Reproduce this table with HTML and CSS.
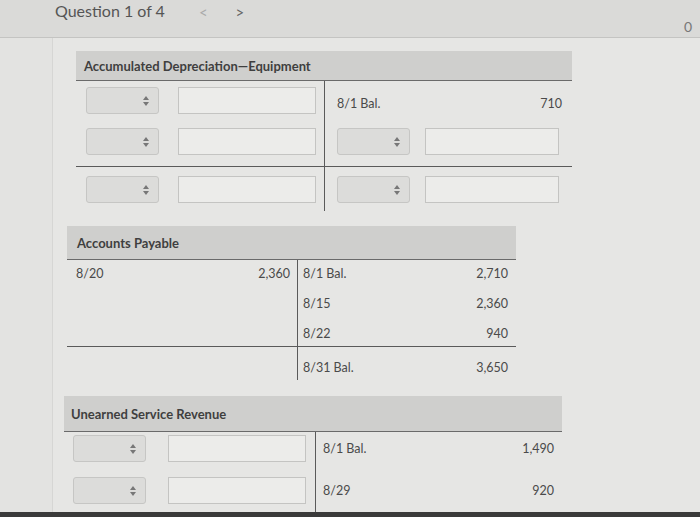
FILE: index.html
```html
<!DOCTYPE html>
<html>
<head>
<meta charset="utf-8">
<link rel="stylesheet" href="styles.css">
</head>
<body>
<header class="topbar">
  <div class="qnav">
    <span class="qtitle">Question 1 of 4</span>
    <span class="arrow prev">&lt;</span>
    <span class="arrow next">&gt;</span>
  </div>
  <span class="score">0</span>
</header>
<main class="content">
  <section class="taccount acc-dep">
    <div class="thead">Accumulated Depreciation—Equipment</div>
    <div class="tbody">
      <div class="cell debit upper">
        <div class="row"><span class="sel"><i class="spin"></i></span><span class="inp"></span></div>
        <div class="row"><span class="sel"><i class="spin"></i></span><span class="inp"></span></div>
      </div>
      <div class="cell credit upper">
        <div class="row text"><span>8/1 Bal.</span><span>710</span></div>
        <div class="row"><span class="sel"><i class="spin"></i></span><span class="inp"></span></div>
      </div>
      <div class="cell debit lower">
        <div class="row"><span class="sel"><i class="spin"></i></span><span class="inp"></span></div>
      </div>
      <div class="cell credit lower">
        <div class="row"><span class="sel"><i class="spin"></i></span><span class="inp"></span></div>
      </div>
    </div>
  </section>

  <section class="taccount payable">
    <div class="thead">Accounts Payable</div>
    <div class="tbody">
      <div class="cell debit upper">
        <div class="row text"><span>8/20</span><span>2,360</span></div>
      </div>
      <div class="cell credit upper">
        <div class="row text"><span>8/1 Bal.</span><span>2,710</span></div>
        <div class="row text"><span>8/15</span><span>2,360</span></div>
        <div class="row text"><span>8/22</span><span>940</span></div>
      </div>
      <div class="cell debit lower"></div>
      <div class="cell credit lower">
        <div class="row text"><span>8/31 Bal.</span><span>3,650</span></div>
      </div>
    </div>
  </section>

  <section class="taccount unearned">
    <div class="thead">Unearned Service Revenue</div>
    <div class="tbody">
      <div class="cell debit upper">
        <div class="row"><span class="sel"><i class="spin"></i></span><span class="inp"></span></div>
        <div class="row"><span class="sel"><i class="spin"></i></span><span class="inp"></span></div>
      </div>
      <div class="cell credit upper">
        <div class="row text"><span>8/1 Bal.</span><span>1,490</span></div>
        <div class="row text"><span>8/29</span><span>920</span></div>
      </div>
    </div>
  </section>
</main>
<footer class="bottom"></footer>
</body>
</html>
```
FILE: styles.css
```css
* { box-sizing: border-box; }
html, body { height: 100%; }
body {
  margin: 0;
  background: #e3e3e1;
  font-family: Lato, "Noto Sans", sans-serif;
  color: #4a4a4a;
  overflow: hidden;
  display: flex;
  flex-direction: column;
}
.topbar {
  height: 38px;
  background: #dadad8;
  border-bottom: 1px solid #c4c4c2;
  display: flex;
  justify-content: space-between;
  padding: 0 8px 0 55px;
  flex-shrink: 0;
}
.qnav {
  display: flex;
  align-items: center;
  margin-top: -5px;
  height: 30px;
}
.qtitle { font-size: 16px; color: #555; }
.arrow { font-size: 15px; color: #666; margin-top: 3px; }
.prev { margin-left: 34px; color: #aaa; }
.next { margin-left: 28px; }
.score {
  align-self: flex-end;
  font-size: 14px;
  color: #777;
  margin-bottom: 2px;
}
.content {
  flex: 1;
  padding: 13px 0 0 0;
  border-left: 1px solid #d6d6d4;
  margin-left: 52px;
  background: #e6e6e4;
}
.taccount { display: flex; flex-direction: column; }
.thead {
  background: #cfcfcd;
  font-weight: bold;
  font-size: 13px;
  color: #3f3f3f;
  display: flex;
  align-items: center;
  border-bottom: 1px solid #6a6a6a;
}
.tbody {
  display: grid;
}
.cell { display: flex; flex-direction: column; }
.credit { border-left: 1px solid #5a5a5a; }
.upper { border-bottom: 1px solid #5a5a5a; }
.row { display: flex; align-items: center; }
.row.text { justify-content: space-between; font-size: 12.5px; color: #4a4a4a; }
.sel {
  width: 73px;
  height: 27px;
  background: #dcdcda;
  border: 1px solid #c6c6c4;
  border-radius: 3px;
  position: relative;
}
.spin {
  position: absolute;
  right: 9px;
  top: 8px;
  width: 6px;
  height: 10px;
}
.spin::before, .spin::after {
  content: "";
  position: absolute;
  left: 0;
  border-left: 3px solid transparent;
  border-right: 3px solid transparent;
}
.spin::before { top: 0; border-bottom: 4px solid #777; }
.spin::after { bottom: 0; border-top: 4px solid #777; }
.inp {
  width: 138px;
  height: 27px;
  background: #ececea;
  border: 1px solid #c4c4c2;
  margin-left: 19px;
}

/* Accumulated Depreciation */
.acc-dep { margin-left: 23px; width: 496px; }
.acc-dep .thead { height: 30px; padding-left: 8px; }
.acc-dep .tbody { grid-template-columns: 248px 248px; }
.acc-dep .debit { padding-left: 10px; }
.acc-dep .credit { padding-left: 12px; padding-right: 10px; }
.acc-dep .upper { height: 86px; padding-top: 6px; gap: 14px; }
.acc-dep .upper .row { height: 27px; }
.acc-dep .credit .inp { width: 134px; margin-left: 15px; }
.acc-dep .lower { height: 44px; padding-top: 9px; }
.acc-dep .credit .row.text { align-items: flex-start; padding-top: 9px; }

/* Accounts Payable */
.payable { margin-left: 14px; width: 449px; margin-top: 15px; }
.payable .thead { height: 34px; padding-left: 10px; }
.payable .tbody { grid-template-columns: 230px 219px; }
.payable .debit { padding: 3px 7px 0 9px; }
.payable .credit { padding: 3px 8px 0 5px; }
.payable .upper { height: 87px; }
.payable .row.text { height: 30px; flex-shrink: 0; align-items: flex-start; padding-top: 3px; }
.payable .credit.upper .row.text:last-child { height: 24px; }
.payable .lower { height: 33px; }
.payable .credit.lower { padding-top: 10px; }

/* Unearned Service Revenue */
.unearned { margin-left: 11px; width: 498px; margin-top: 16px; }
.unearned .thead { height: 36px; padding-left: 7px; }
.unearned .tbody { grid-template-columns: 251px 247px; }
.unearned .debit { padding-left: 9px; padding-top: 3px; gap: 15px; }
.unearned .debit .inp { margin-left: 22px; }
.unearned .credit { padding: 3px 8px 0 7px; gap: 15px; }
.unearned .upper { border-bottom: none; height: 80px; }
.unearned .row { height: 27px; }

.bottom {
  height: 6px;
  background: #3a3a3a;
  flex-shrink: 0;
}
```
